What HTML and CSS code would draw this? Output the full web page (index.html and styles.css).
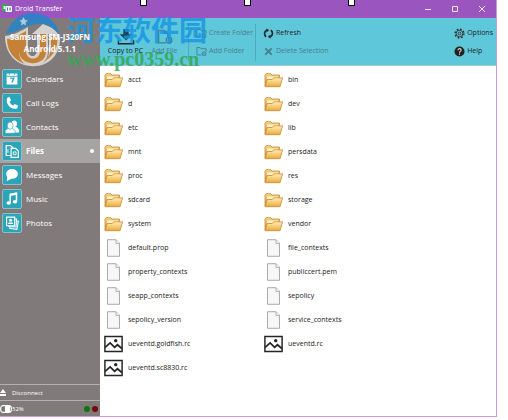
FILE: index.html
```html
<!DOCTYPE html>
<html lang="en">
<head>
<meta charset="utf-8">
<title>Droid Transfer</title>
<link rel="stylesheet" href="styles.css">
</head>
<body>
<svg class="defs" aria-hidden="true">
  <defs>
    <linearGradient id="gold" x1="0" y1="0" x2="0" y2="1"><stop offset="0" stop-color="#fff0b4"/><stop offset="1" stop-color="#eda93c"/></linearGradient>
    <linearGradient id="goldBack" x1="0" y1="0" x2="0" y2="1"><stop offset="0" stop-color="#f8d684"/><stop offset="1" stop-color="#d58d2c"/></linearGradient>
    <symbol id="folder" viewBox="0 0 19 15">
      <path d="M1 13.500V2.500L2.200 1.200h4.500L8 2.500h7.500v3L14 13z" fill="url(#goldBack)" stroke="#c98a35" stroke-width=".8"/>
      <path d="M3 4h11v3H3z" fill="#fff3cf"/>
      <path d="M1 14.200L3.300 7h5l1.300-1.700h9L16 14.200z" fill="url(#gold)" stroke="#c98a35" stroke-width=".8"/>
    </symbol>
    <symbol id="page" viewBox="0 0 14 18">
      <path d="M1 .700h8.500L13 4.200v13.100H1z" fill="#f7f7f7" stroke="#a2a2a2" stroke-width=".9"/>
      <path d="M9.500.8v3.500H13" fill="#fff" stroke="#a2a2a2" stroke-width=".9"/>
    </symbol>
    <symbol id="image" viewBox="0 0 17 15">
      <path d="M.8.800h15.400v13.400H.8z" fill="#fff" stroke="#252525" stroke-width="1.300"/>
      <path d="M1 10.500l4.500-4 4 4 2.500-2.300 4 3.300" fill="none" stroke="#252525" stroke-width="1.600"/>
      <circle cx="10.500" cy="4.500" r="1.500" fill="#252525"/>
    </symbol>
    <symbol id="addfolder" viewBox="0 0 12 11">
      <path d="M6 9.300H1V1.200h3.500l1 1.300H11v3" fill="none" stroke="currentColor"/>
      <circle cx="8.800" cy="8" r="2.200" fill="none" stroke="currentColor"/><path d="M7.600 8h2.400M8.800 6.800v2.400" stroke="currentColor" stroke-width=".6"/>
    </symbol>
  </defs>
</svg>

<div class="window">
  <header class="titlebar">
    <svg class="app-icon" viewBox="0 0 10 9"><rect width="5" height="7" rx="1" fill="#39a84a"/><path d="M1.500 2h2v3h-2z" fill="#fff"/><rect x="3.500" y="2" width="6.500" height="6" rx="1" fill="#edf7ff"/><path d="M5 3.500h1v3H5zM7.500 3.500h1.200v3H7.500z" fill="#3483d1"/></svg>
    <h1>Droid Transfer</h1>
    <div class="window-buttons">
      <button aria-label="Minimize"><svg viewBox="0 0 8 8"><path d="M1 4.500h6"/></svg></button>
      <button aria-label="Maximize"><svg viewBox="0 0 8 8"><path d="M1.500 1.500h5v5h-5z"/></svg></button>
      <button aria-label="Close"><svg viewBox="0 0 8 8"><path d="M1 1l6 6M7 1L1 7"/></svg></button>
    </div>
  </header>

  <div class="main">
    <aside class="sidebar">
      <div class="device"><strong>Samsung SM-J320FN</strong><strong>Android 5.1.1</strong></div>
      <nav>
        <a href="#calendars"><svg viewBox="0 0 20 20"><path d="M4 4h12v12H4z" fill="#fff"/><path d="M4 7h12M7 2.500v3M13 2.500v3" stroke="#2ba5b9"/><path d="M8 9h4l-2 5" fill="none" stroke="#2ba5b9" stroke-width="1.500"/></svg>Calendars</a>
        <a href="#calls"><svg viewBox="0 0 20 20"><path d="M4.500 4.500L7 3l2 4-1.800 1.500c.8 2 2.300 3.500 4.300 4.300L13 11l4 2-1.500 3C9 18.500 2.500 11 4.500 4.500z" fill="#fff"/></svg>Call Logs</a>
        <a href="#contacts"><svg viewBox="0 0 20 20"><g fill="#fff"><ellipse cx="12.500" cy="6.500" rx="3" ry="3.700"/><path d="M10 10h5l3 3v3h-7z"/><g stroke="#2ba5b9" stroke-width=".7"><path d="M2.500 17v-3l3-2.500h5l3 2.500v3z"/><ellipse cx="8" cy="8.500" rx="3.200" ry="4"/></g></g></svg>Contacts</a>
        <a href="#files" class="current" aria-current="page"><svg viewBox="0 0 20 20"><g fill="#2ba5b9" stroke="#fff" stroke-width="1.300"><path d="M3.500 4h5l3 3v8h-8z"/><path d="M9 7h5l3 3v7H9z"/></g><path d="M5.500 8v4M11.500 11h3v3h-3z" fill="none" stroke="#fff"/></svg>Files<span class="dot"></span></a>
        <a href="#messages"><svg viewBox="0 0 20 20"><ellipse cx="10" cy="8.800" rx="6.500" ry="5.500" fill="#fff"/><path d="M5 11l-1 6 6-3z" fill="#fff"/></svg>Messages</a>
        <a href="#music"><svg viewBox="0 0 20 20"><path d="M8 14V5l7-1.500v9" fill="none" stroke="#fff" stroke-width="1.700"/><path d="M8 5.500l7-1.500" stroke="#fff" stroke-width="2.500"/><ellipse cx="6.300" cy="14.500" rx="2.500" ry="2" fill="#fff"/><ellipse cx="13.300" cy="13" rx="2.500" ry="2" fill="#fff"/></svg>Music</a>
        <a href="#photos"><svg viewBox="0 0 20 20"><g fill="#2ba5b9" stroke="#fff" stroke-width="1.200"><path d="M9 7l8 1-1.500 9-8-1z"/><path d="M6 5l9 .5-.5 9-8-.5z"/><path d="M4 3.500h9V13H4z"/></g><path d="M5.500 11c0-2 6-2 6 0z" fill="#fff"/><circle cx="8.500" cy="7" r="1.700" fill="#fff"/></svg>Photos</a>
      </nav>
      <button class="disconnect"><svg viewBox="0 0 6 7"><path d="M0 4l3-4 3 4zM0 5h6v2H0z" fill="#fff"/></svg>Disconnect</button>
      <div class="status">
        <svg viewBox="0 0 12 8"><rect x=".7" y=".7" width="10.600" height="6.600" rx="2.500" fill="#777" stroke="#fff" stroke-width="1.200"/><path d="M5 1h5v6H5z" fill="#fff"/></svg>
        <span>52%</span><i class="led green"></i><i class="led red"></i>
      </div>
    </aside>

    <section class="content">
      <div class="toolbar">
        <button class="big"><svg viewBox="0 0 20 20"><path d="M1.500 13.500v4h17v-4" fill="none" stroke="#222" stroke-width="1.400"/><path d="M7 1h6v6h4l-7 7-7-7h4z" fill="#1c465c"/></svg><span>Copy to PC</span></button>
        <button class="big" disabled><svg viewBox="0 0 20 20"><path d="M11 16.500H3v-14h6.500L13 6v3.500M9.500 2.500V6H13" fill="none" stroke="currentColor" stroke-width="1.300"/><circle cx="14.500" cy="13.500" r="3.200" fill="none" stroke="currentColor" stroke-width="1.300"/><path d="M13 13.500h3M14.500 12v3" stroke="currentColor"/></svg><span>Add File</span></button>
        <div class="group folders">
          <button disabled><svg viewBox="0 0 12 11"><use href="#addfolder"/></svg>Create Folder</button>
          <button disabled><svg viewBox="0 0 12 11"><use href="#addfolder"/></svg>Add Folder</button>
        </div>
        <div class="group actions">
          <button><svg viewBox="0 0 12 11"><path d="M3.500 9A4 4 0 0 1 4 2M8.500 2A4 4 0 0 1 8 9" fill="none" stroke="#222" stroke-width="1.800"/><path d="M3.500 0l3.200 1.700L4 4.500zM8.500 11L5.300 9.300 8 6.500z" fill="#222"/></svg>Refresh</button>
          <button disabled><svg viewBox="0 0 12 11"><path d="M2.500 2l7 7M9.500 2l-7 7" stroke="currentColor" stroke-width="2"/></svg>Delete Selection</button>
        </div>
        <div class="group help">
          <button><svg viewBox="0 0 12 12"><circle cx="6" cy="6" r="4.800" fill="none" stroke="#333" stroke-width="1.600" stroke-dasharray="1.900 1.870"/><circle cx="6" cy="6" r="3.600" fill="none" stroke="#333"/><circle cx="6" cy="6" r="1.500" fill="none" stroke="#333"/></svg>Options</button>
          <button><svg viewBox="0 0 12 12"><circle cx="6" cy="6" r="5.500" fill="#222"/><path d="M4.300 4.600c0-2.300 3.500-2.200 3.500 0C7.800 6 6 5.800 6 7.300M6 8.300v1.300" fill="none" stroke="#ddd" stroke-width="1.200"/></svg>Help</button>
        </div>
      </div>
      <ul class="files">
        <li><svg><use href="#folder"/></svg>acct</li><li><svg><use href="#folder"/></svg>bin</li>
        <li><svg><use href="#folder"/></svg>d</li><li><svg><use href="#folder"/></svg>dev</li>
        <li><svg><use href="#folder"/></svg>etc</li><li><svg><use href="#folder"/></svg>lib</li>
        <li><svg><use href="#folder"/></svg>mnt</li><li><svg><use href="#folder"/></svg>persdata</li>
        <li><svg><use href="#folder"/></svg>proc</li><li><svg><use href="#folder"/></svg>res</li>
        <li><svg><use href="#folder"/></svg>sdcard</li><li><svg><use href="#folder"/></svg>storage</li>
        <li><svg><use href="#folder"/></svg>system</li><li><svg><use href="#folder"/></svg>vendor</li>
        <li><svg><use href="#page"/></svg>default.prop</li><li><svg><use href="#page"/></svg>file_contexts</li>
        <li><svg><use href="#page"/></svg>property_contexts</li><li><svg><use href="#page"/></svg>publiccert.pem</li>
        <li><svg><use href="#page"/></svg>seapp_contexts</li><li><svg><use href="#page"/></svg>sepolicy</li>
        <li><svg><use href="#page"/></svg>sepolicy_version</li><li><svg><use href="#page"/></svg>service_contexts</li>
        <li><svg><use href="#image"/></svg>ueventd.goldfish.rc</li><li><svg><use href="#image"/></svg>ueventd.rc</li>
        <li><svg><use href="#image"/></svg>ueventd.sc8830.rc</li>
      </ul>
    </section>
  </div>
</div>

<div class="watermark">
  <svg viewBox="0 0 60 56">
    <path d="M3 22C8 8 18 1 30 1c15 0 26 11 27 26-3-9-10-14-18-15-15-1-23 8-36 10z" fill="#2485cd"/>
    <path d="M2 24c9-1 16-5 23-9v23c0 8 9 8 9 0V22h-5l11-10 11 10h-6v17c0 13-10 16-17 15C13 53 2 42 2 24z" fill="#e4e2df"/>
    <path d="M39 12c9 2 17 8 18 15 0 15-10 26-24 27 8-2 13-7 13-15V22h5z" fill="#e4e2df"/>
    <path d="M4 27c5 0 9-2 12-4v16c0 6 2 10 6 13C11 48 4 39 4 27z" fill="#d2832b"/>
    <path d="M16 23l7-4v20c0 10 14 10 14 0V22h6v18c0 15-27 15-27-1z" fill="#d2832b"/>
    <path d="M48 24h6c2 11-4 21-14 26 6-5 8-9 8-15z" fill="#d2832b"/>
    <path d="M19 8l1.500-3L22 8l3 .5-2.500 2 .5 3-2.500-1.500-2.500 1.500.5-3-2-2z" fill="#b8d8e8"/>
  </svg>
  <div><span class="mark-name" lang="zh">河东软件园</span><span class="mark-url">www.pc0359.cn</span></div>
</div>
<div class="handles"><i></i><i></i><i></i></div>
</body>
</html>
```

FILE: styles.css
```css
* { box-sizing: border-box; }
body { margin: 0; background: #fff; color: #222; font: 7px/10px "Open Sans", "Noto Sans", sans-serif; }
button { display: flex; align-items: center; padding: 0; border: 0; background: none; color: inherit; font: inherit; white-space: nowrap; }
svg { flex: none; }
.defs { position: absolute; width: 0; height: 0; }
.window { display: flex; flex-direction: column; min-height: calc(100vh - 3px); margin-right: 11px; border: solid #cb9bdd; border-width: 0 1px 1px 0; }

.titlebar { display: flex; align-items: center; height: 18px; padding: 0 10px 0 2px; background: #9a55be; border-bottom: 1px solid #a94fc4; color: #fff; }
.app-icon { width: 10px; height: 9px; }
.titlebar h1 { margin: 0 0 0 3px; font-size: 7px; font-weight: 400; }
.window-buttons { display: flex; gap: 19px; margin-left: auto; }
.window-buttons svg { width: 8px; height: 8px; fill: none; stroke: #f3e5f7; }

.main { display: flex; flex: 1; }
.sidebar { display: flex; flex-direction: column; width: 100px; background: #807b7a; color: #fff; }
.device { position: relative; z-index: 2; display: flex; flex-direction: column; justify-content: center; height: 49px; text-align: center; font-size: 8px; line-height: 12px; }
.sidebar nav { flex: 1; }
.sidebar a { display: flex; align-items: center; gap: 4px; height: 24px; padding-left: 2px; color: #fff; font-size: 8px; text-decoration: none; }
.sidebar a svg { width: 20px; height: 20px; background: #2ba5b9; border: 1px solid #92bdc5; border-radius: 2px; }
.sidebar .current { background: #a6a4a3; font-weight: 700; }
.dot { width: 4px; height: 4px; margin: 0 6px 0 auto; border-radius: 50%; background: #fff; }
.disconnect { gap: 6px; height: 16px; border-top: 1px solid #b4b0af; font-size: 6px; }
.disconnect svg { width: 6px; height: 7px; }
.status { display: flex; align-items: center; height: 16px; border-top: 1px solid #b4b0af; font-size: 6px; }
.status svg { width: 12px; height: 8px; }
.status span { margin-right: auto; }
.led { width: 6px; height: 6px; margin-right: 2px; border-radius: 50%; }
.green { background: #0b770f; }
.red { background: #780809; }

.content { flex: 1; }
.toolbar { display: flex; align-items: center; height: 48px; padding: 1px 3px 0 6px; background: #5ec7da; border-bottom: 1px solid #9fcbd3; }
.toolbar button:disabled { color: #477f8b; }
.big { flex-direction: column; width: 39px; }
.big svg { width: 18px; height: 18px; }
.big span { position: relative; z-index: 2; }
.group { display: flex; flex-direction: column; gap: 7px; }
.group button { gap: 2px; }
.group svg { width: 11px; height: 11px; }
.folders { width: 67px; margin-left: 4px; padding: 4px 0 4px 7px; border-left: 1px solid #50aabb; }
.actions { padding: 4px 0 4px 7px; border-left: 1px solid #50aabb; }
.help { margin-left: auto; }

.files { display: grid; grid-template-columns: repeat(auto-fill, 160px); grid-auto-rows: 24px; max-width: 360px; margin: 0; padding: 2px 0 0 4px; list-style: none; }
.files li { display: flex; align-items: center; gap: 5px; }
.files svg { width: 19px; height: 18px; }

.watermark { position: absolute; top: 12px; left: 3px; display: flex; gap: 4px; pointer-events: none; }
.watermark svg { width: 60px; height: 56px; opacity: .85; }
.watermark div { display: flex; flex-direction: column; }
.mark-name { color: #1694e3; opacity: .8; font: 700 28px/34px "Noto Sans CJK SC", sans-serif; }
.mark-url { color: #35a853; opacity: .85; font: 700 20px/26px "Liberation Serif", serif; }

.handles { position: absolute; top: 0; left: 140px; display: flex; gap: 97px; }
.handles i { width: 7px; height: 6px; border: 1px solid #000; border-top: 0; background: #fff; }
```
